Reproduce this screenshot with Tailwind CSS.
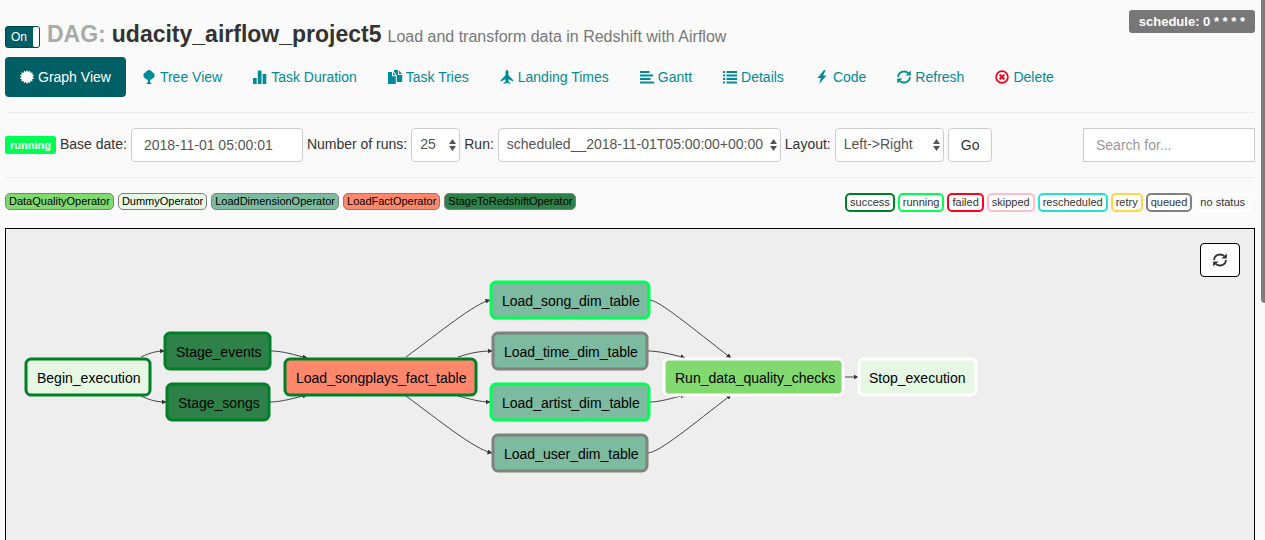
<!DOCTYPE html>
<html lang="en">
<head>
<meta charset="utf-8">
<meta name="viewport" content="width=device-width, initial-scale=1">
<title>Airflow - DAG udacity_airflow_project5</title>
<script src="https://cdn.jsdelivr.net/npm/@tailwindcss/browser@4"></script>
</head>
<body class="flex h-screen flex-col overflow-hidden bg-[#fafafa] pl-[5px] pr-[10px] font-['Liberation_Sans',Arial,sans-serif] text-sm text-[#333]">

<header class="flex items-start justify-between">
  <div class="flex items-end pt-5">
    <label class="mr-[7px] mb-[3px] flex h-[22px] w-[35px] cursor-pointer items-center justify-between rounded-[3px] border border-[#00454a] bg-[#005e65] pl-[5px] text-xs text-white">
      <input type="checkbox" checked class="sr-only">
      <span>On</span>
      <span class="h-5 w-[6px] rounded-[2px] bg-white"></span>
    </label>
    <h1 class="flex items-baseline gap-[6px] text-[23px] leading-[28px] font-bold">
      <span class="text-[#aaa]">DAG:</span>
      <span>udacity_airflow_project5</span>
      <small class="text-base leading-[28px] font-normal text-[#777]">Load and transform data in Redshift with Airflow</small>
    </h1>
  </div>
  <span class="mt-[10px] rounded-[3px] bg-[#777] px-[10px] text-[13px] leading-[23px] font-bold text-white">schedule: 0 * * * *</span>
</header>

<nav class="mt-[6px] flex gap-px text-[#008c97]">
  <a href="#" class="flex h-10 items-center gap-1 rounded bg-[#005e65] px-[15px] text-white">
    <svg class="size-[14px]" viewBox="0 0 14 14" fill="currentColor"><path d="M7 0l1.200 1.900L10 .6l.4 2.200 2.300-.4-.5 2.200 2.200.6L12.500 7l1.700 1.600-2.200.7.600 2.200-2.200-.4-.5 2.200-1.800-1.200L7 14l-1.200-1.900L4 13.300l-.5-2.200-2.200.4.6-2.200L-.2 8.600 1.500 7-.2 5.200l2.100-.6-.6-2.200 2.300.4L4 .6l1.800 1.300z"/></svg>
    Graph View</a>
  <a href="#" class="flex h-10 items-center gap-1 px-[15px]">
    <svg class="size-[14px]" viewBox="0 0 14 14" fill="currentColor"><path d="M7 0c1.600 0 2.800 1 3.200 2.300C11.700 2.700 12.800 4 12.600 5.800c-.1 1.500-1.200 2.500-2.400 2.900-.5.600-1.200 1-2 1.200V12.500l1.300.7v.8h-5v-.8l1.300-.7V9.900c-.8-.2-1.500-.6-2-1.200C2.600 8.300 1.500 7.300 1.400 5.800 1.200 4 2.300 2.700 3.800 2.300 4.200 1 5.400 0 7 0z"/></svg>
    Tree View</a>
  <a href="#" class="flex h-10 items-center gap-1 px-[15px]">
    <svg class="size-[14px]" viewBox="0 0 14 14" fill="currentColor"><rect x="0" y="8" width="3.700" height="6" rx=".5"/><rect x="4.800" y=".5" width="3.700" height="13.500" rx=".5"/><rect x="9.600" y="4" width="3.700" height="10" rx=".5"/></svg>
    Task Duration</a>
  <a href="#" class="flex h-10 items-center gap-1 px-[15px]">
    <svg class="size-[14px] overflow-visible" viewBox="0 0 14 14" fill="currentColor"><path d="M0 2h4v4.200h3.800V14H0zM5 2l2.600 3.200H5zM6 0h4v5h4.200v7H8.800V5.200L6 1.500zM11 .3L14 4h-3z"/></svg>
    Task Tries</a>
  <a href="#" class="flex h-10 items-center gap-1 px-[15px]">
    <svg class="size-[14px]" viewBox="0 0 14 14" fill="currentColor"><path d="M7 0c.9 0 1.500 1.200 1.500 2.400v2.800l4.600 4.900c.3.300.4.900.2 1.500L8.600 9.200l-.2 2.200 2 1.700v.9L7 12.800 3.600 14v-.9l2-1.700-.2-2.200-4.700 2.400c-.2-.6-.1-1.200.2-1.500l4.600-4.900V2.400C5.500 1.200 6.100 0 7 0z"/></svg>
    Landing Times</a>
  <a href="#" class="flex h-10 items-center gap-1 px-[15px]">
    <svg class="size-[14px]" viewBox="0 0 14 14" fill="currentColor"><path d="M0 1h9.500v2H0zM0 4.500h13v2H0zM0 8h10.500v2H0zM0 11.500h14v2H0z"/></svg>
    Gantt</a>
  <a href="#" class="flex h-10 items-center gap-1 px-[15px]">
    <svg class="size-[14px]" viewBox="0 0 14 14" fill="currentColor"><path d="M0 1h2v2H0zM3.500 1H14v2H3.500zM0 4.500h2v2H0zM3.500 4.500H14v2H3.500zM0 8h2v2H0zM3.500 8H14v2H3.500zM0 11.500h2v2H0zM3.500 11.500H14v2H3.500z"/></svg>
    Details</a>
  <a href="#" class="flex h-10 items-center gap-1 px-[15px]">
    <svg class="size-[14px]" viewBox="0 0 14 14" fill="currentColor"><path d="M9 0L2.500 8h3.300L4.200 14 11.500 5.500H8.200L10.500 0z"/></svg>
    Code</a>
  <a href="#" class="flex h-10 items-center gap-1 px-[15px]">
    <svg class="size-[14px]" viewBox="0 0 14 14" fill="none" stroke="currentColor" stroke-width="1.800"><path d="M1.200 7A5.800 5.300 0 0 1 11.200 3.200M12.800 7A5.800 5.300 0 0 1 2.800 10.800"/><path fill="currentColor" stroke="none" d="M13.800.5v5H8.500zM.2 13.500v-5h5.300z"/></svg>
    Refresh</a>
  <a href="#" class="flex h-10 items-center gap-1 px-[15px]">
    <svg class="size-[14px] text-[#f5001d]" viewBox="0 0 14 14" fill="none" stroke="currentColor"><circle cx="7" cy="7" r="5.900" stroke-width="1.700"/><path stroke-width="2" d="M4.700 4.700l4.600 4.600M9.300 4.700L4.700 9.300"/></svg>
    Delete</a>
</nav>

<hr class="mt-[15px] border-[#eee]">

<form class="mt-[15px] flex items-center gap-1">
  <span class="rounded-[2px] bg-[#00ff55] px-[5px] text-[11px] leading-[18px] font-bold text-white">running</span>
  <label for="base" class="pb-0.5">Base date:</label>
  <input id="base" type="text" value="2018-11-01 05:00:01" class="h-[34px] w-[172px] rounded border border-[#ccc] bg-white px-3 text-[#555]">
  <label for="runs" class="pb-0.5">Number of runs:</label>
  <div class="relative">
    <select id="runs" class="block h-[34px] w-[49px] appearance-none rounded border border-[#ccc] bg-white pb-0.5 pl-2 text-[#555]"><option>25</option></select>
    <svg class="pointer-events-none absolute top-[11px] right-[4px] h-3 w-[7px]" viewBox="0 0 7 12" fill="#555"><path d="M3.500 0L7 5H0zM3.500 12L0 7h7z"/></svg>
  </div>
  <label for="run" class="pb-0.5">Run:</label>
  <div class="relative">
    <select id="run" class="block h-[34px] w-[283px] appearance-none rounded border border-[#ccc] bg-white pb-0.5 pl-2 text-[#555]"><option>scheduled__2018-11-01T05:00:00+00:00</option></select>
    <svg class="pointer-events-none absolute top-[11px] right-[4px] h-3 w-[7px]" viewBox="0 0 7 12" fill="#555"><path d="M3.500 0L7 5H0zM3.500 12L0 7h7z"/></svg>
  </div>
  <label for="layout" class="pb-0.5">Layout:</label>
  <div class="relative">
    <select id="layout" class="block h-[34px] w-[109px] appearance-none rounded border border-[#ccc] bg-white pb-0.5 pl-2 text-[#555]"><option>Left-&gt;Right</option></select>
    <svg class="pointer-events-none absolute top-[11px] right-[4px] h-3 w-[7px]" viewBox="0 0 7 12" fill="#555"><path d="M3.500 0L7 5H0zM3.500 12L0 7h7z"/></svg>
  </div>
  <button type="submit" class="h-[34px] rounded border border-[#ccc] bg-white px-3">Go</button>
  <input type="search" aria-label="Search for" placeholder="Search for..." class="ml-auto h-[34px] w-[172px] border border-[#ccc] bg-white px-3 placeholder:text-[#999]">
</form>

<hr class="mt-[15px] border-[#eee]">

<div class="mt-[15px] flex items-start justify-between text-[11px] text-black">
  <div class="flex gap-1 leading-[15px]">
    <span class="rounded-[5px] border border-[#808080] bg-[#82d96f] px-[3px]">DataQualityOperator</span>
    <span class="rounded-[5px] border border-[#808080] bg-[#e6f7e4] px-[3px]">DummyOperator</span>
    <span class="rounded-[5px] border border-[#808080] bg-[#7dbba1] px-[3px]">LoadDimensionOperator</span>
    <span class="rounded-[5px] border border-[#808080] bg-[#ff886c] px-[3px]">LoadFactOperator</span>
    <span class="rounded-[5px] border border-[#808080] bg-[#2e8249] px-[3px]">StageToRedshiftOperator</span>
  </div>
  <div class="mr-[5px] flex gap-[3px] leading-[15px] text-[#333]">
    <span class="rounded-[5px] border-2 border-[#008026] bg-white px-[3px]">success</span>
    <span class="rounded-[5px] border-2 border-[#00ff55] bg-white px-[3px]">running</span>
    <span class="rounded-[5px] border-2 border-[#ff001d] bg-white px-[3px]">failed</span>
    <span class="rounded-[5px] border-2 border-[#ffbdc9] bg-white px-[3px]">skipped</span>
    <span class="rounded-[5px] border-2 border-[#22e2d3] bg-white px-[3px]">rescheduled</span>
    <span class="rounded-[5px] border-2 border-[#ffd543] bg-white px-[3px]">retry</span>
    <span class="rounded-[5px] border-2 border-[#808080] bg-white px-[3px]">queued</span>
    <span class="rounded-[5px] border-2 border-white px-[3px]">no status</span>
  </div>
</div>

<main class="relative mt-4 min-h-0 flex-1 overflow-hidden border border-b-0 border-black bg-[#eee]">
  <svg class="block h-[311px] w-[1000px] text-sm" viewBox="6 229 1000 311" role="img" aria-label="DAG graph">
    <defs>
      <marker id="arrow" viewBox="0 0 10 10" refX="9" refY="5" markerUnits="userSpaceOnUse" markerWidth="5" markerHeight="5" orient="auto"><path d="M0 0L10 5L0 10z" fill="#333"/></marker>
    </defs>
    <g fill="none" stroke="#444" stroke-width="1">
      <path marker-end="url(#arrow)" d="M141 357C150 353 156 351 164 351"/>
      <path marker-end="url(#arrow)" d="M141 396C150 400 156 402 166 402"/>
      <path marker-end="url(#arrow)" d="M271 351C283 351 295 355 307 358"/>
      <path marker-end="url(#arrow)" d="M270 402C281 402 295 398 307 395"/>
      <path marker-end="url(#arrow)" d="M406 357C440 332 474 304 490 300"/>
      <path marker-end="url(#arrow)" d="M458 357C470 353 480 351 492 351"/>
      <path marker-end="url(#arrow)" d="M458 396C470 399 480 402 490 402"/>
      <path marker-end="url(#arrow)" d="M406 396C440 421 474 449 492 453"/>
      <path marker-end="url(#arrow)" d="M650 300C660 301 692 328 731 358"/>
      <path marker-end="url(#arrow)" d="M648 351C658 351 671 354 685 358"/>
      <path marker-end="url(#arrow)" d="M650 402C660 402 672 398 685 395"/>
      <path marker-end="url(#arrow)" d="M648 453C660 452 692 425 731 395"/>
      <path marker-end="url(#arrow)" d="M845 377H858"/>
    </g>
    <g stroke-width="3">
      <rect x="26" y="359" width="124" height="36" rx="5" fill="#e6f7e4" stroke="#008026"/>
      <rect x="165" y="333" width="105" height="36" rx="5" fill="#2e8249" stroke="#008026"/>
      <rect x="167" y="384" width="102" height="36" rx="5" fill="#2e8249" stroke="#008026"/>
      <rect x="285" y="359" width="191" height="36" rx="5" fill="#ff886c" stroke="#008026"/>
      <rect x="491" y="282" width="158" height="36" rx="5" fill="#7dbba1" stroke="#00ff55"/>
      <rect x="493" y="333" width="154" height="36" rx="5" fill="#7dbba1" stroke="#808080"/>
      <rect x="491" y="384" width="158" height="36" rx="5" fill="#7dbba1" stroke="#00ff55"/>
      <rect x="493" y="435" width="154" height="36" rx="5" fill="#7dbba1" stroke="#808080"/>
      <rect x="664" y="359" width="179" height="36" rx="5" fill="#82d96f" stroke="#fff"/>
      <rect x="859" y="359" width="117" height="36" rx="5" fill="#e6f7e4" stroke="#fff"/>
    </g>
    <g fill="#000">
      <text x="37" y="383">Begin_execution</text>
      <text x="176" y="357">Stage_events</text>
      <text x="178" y="408">Stage_songs</text>
      <text x="296" y="383">Load_songplays_fact_table</text>
      <text x="502" y="306">Load_song_dim_table</text>
      <text x="504" y="357">Load_time_dim_table</text>
      <text x="502" y="408">Load_artist_dim_table</text>
      <text x="504" y="459">Load_user_dim_table</text>
      <text x="675" y="383">Run_data_quality_checks</text>
      <text x="869" y="383">Stop_execution</text>
    </g>
  </svg>
  <button type="button" aria-label="Refresh graph" class="absolute top-[14px] right-[14px] flex h-[34px] w-10 items-center justify-center rounded border border-black bg-white">
    <svg class="size-[14px]" viewBox="0 0 14 14" fill="none" stroke="currentColor" stroke-width="1.800"><path d="M1.200 7A5.800 5.300 0 0 1 11.200 3.200M12.800 7A5.800 5.300 0 0 1 2.800 10.800"/><path fill="currentColor" stroke="none" d="M13.800.5v5H8.500zM.2 13.500v-5h5.300z"/></svg>
  </button>
</main>

<div class="fixed top-0 right-0 h-[303px] w-1 rounded-bl bg-[#7d7d7d]" aria-hidden="true"></div>
</body>
</html>
